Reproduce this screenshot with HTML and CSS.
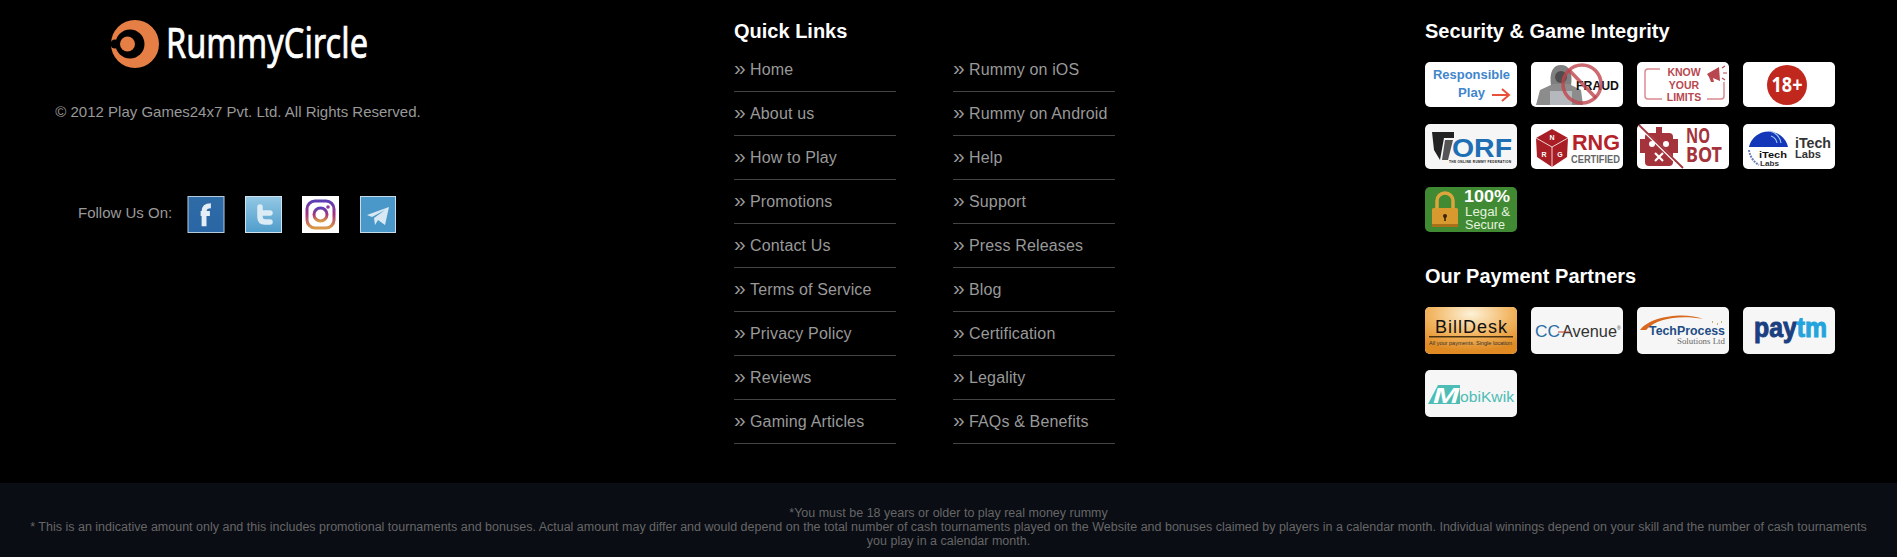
FILE: index.html
```html
<!DOCTYPE html>
<html lang="en">
<head>
    <meta charset="UTF-8">
    <meta name="viewport" content="width=device-width, initial-scale=1.0">
    <title>RummyCircle Footer</title>
    <link rel="stylesheet" href="styles.css">
</head>
<body>
    <footer class="site-footer">
        <div class="footer-main">
            <div class="brand-col">
                <svg class="logo" viewBox="0 0 320 52" role="img" aria-label="RummyCircle">
                    <circle cx="25" cy="26" r="24" fill="#e57f45"/>
                    <circle cx="20" cy="26" r="14.5" fill="#000"/>
                    <circle cx="17.5" cy="26" r="7.5" fill="#e57f45"/>
                    <circle cx="5" cy="26" r="4.5" fill="#000"/>
                    <text class="logo-text" x="56" y="40" textLength="202" lengthAdjust="spacingAndGlyphs">RummyCircle</text>
                </svg>
                <p class="copyright">© 2012 Play Games24x7 Pvt. Ltd. All Rights Reserved.</p>
                <div class="follow">
                    <span class="follow-label">Follow Us On:</span>
                    <svg class="social social-fb" viewBox="0 0 38 38">
                        <defs><linearGradient id="fbg" x1="0" y1="0" x2="0" y2="1"><stop offset="0" stop-color="#2f6ca6"/><stop offset="1" stop-color="#2a65a5"/></linearGradient></defs>
                        <rect x=".5" y=".5" width="37" height="37" fill="url(#fbg)" stroke="#b9cfe0"/>
                        <path d="M17 31V16Q17 10 24 10M13.5 18H23" fill="none" stroke="#e6eef5" stroke-width="5"/>
                    </svg>
                    <svg class="social" viewBox="0 0 37 37">
                        <defs><linearGradient id="twg" x1="0" y1="0" x2="0" y2="1"><stop offset="0" stop-color="#93c8e4"/><stop offset="1" stop-color="#4f9dcb"/></linearGradient></defs>
                        <rect x=".5" y=".5" width="36" height="36" fill="url(#twg)" stroke="#cfe2ee"/>
                        <path d="M15 11V21Q15 26 20 26H25M15 17H25" fill="none" stroke="#dcecf5" stroke-width="5.5" stroke-linecap="round"/>
                    </svg>
                    <svg class="social social-ig" viewBox="0 0 37 37">
                        <defs><linearGradient id="ing" x1="0" y1="0" x2="0" y2="1"><stop offset="0" stop-color="#5b3fb5"/><stop offset=".5" stop-color="#a8327f"/><stop offset="1" stop-color="#d99a45"/></linearGradient></defs>
                        <rect width="37" height="37" fill="#fff"/>
                        <rect x="5" y="5" width="27" height="27" rx="8" fill="none" stroke="url(#ing)" stroke-width="3"/>
                        <circle cx="18.5" cy="18.5" r="6.5" fill="none" stroke="url(#ing)" stroke-width="3"/>
                        <circle cx="26" cy="11" r="1.8" fill="#8b3a9c"/>
                    </svg>
                    <svg class="social social-tg" viewBox="0 0 36 37">
                        <rect x=".5" y=".5" width="35" height="36" fill="#4a98c9" stroke="#c5dcea"/>
                        <path d="M7 19 29 11 25 29 18 24 15 29 14 22 25 14 12 21Z" fill="#d9e9f3"/>
                    </svg>
                </div>
            </div>

            <nav class="links-col">
                <h3 class="footer-title">Quick Links</h3>
                <div class="links-grid">
                    <ul class="link-list">
                        <li><a href="#">Home</a></li>
                        <li><a href="#">About us</a></li>
                        <li><a href="#">How to Play</a></li>
                        <li><a href="#">Promotions</a></li>
                        <li><a href="#">Contact Us</a></li>
                        <li><a href="#">Terms of Service</a></li>
                        <li><a href="#">Privacy Policy</a></li>
                        <li><a href="#">Reviews</a></li>
                        <li><a href="#">Gaming Articles</a></li>
                    </ul>
                    <ul class="link-list">
                        <li><a href="#">Rummy on iOS</a></li>
                        <li><a href="#">Rummy on Android</a></li>
                        <li><a href="#">Help</a></li>
                        <li><a href="#">Support</a></li>
                        <li><a href="#">Press Releases</a></li>
                        <li><a href="#">Blog</a></li>
                        <li><a href="#">Certification</a></li>
                        <li><a href="#">Legality</a></li>
                        <li><a href="#">FAQs &amp; Benefits</a></li>
                    </ul>
                </div>
            </nav>

            <div class="badges-col">
                <h3 class="footer-title">Security &amp; Game Integrity</h3>
                <div class="badge-grid">
                    <svg class="badge" viewBox="0 0 92 45">
                        <text class="b-bold c-blue" x="8" y="17" font-size="12.5" textLength="77" lengthAdjust="spacingAndGlyphs">Responsible</text>
                        <text class="b-bold c-blue" x="33" y="35" font-size="13" textLength="27" lengthAdjust="spacingAndGlyphs">Play</text>
                        <path d="M67 33H83M77 27 84 33 77 39" fill="none" stroke="#e8503a" stroke-width="2"/>
                    </svg>
                    <svg class="badge" viewBox="0 0 92 45">
                        <path d="M20 24C18 10 22 3 30 3 38 3 42 10 40 24Z" fill="#7f7f7f"/>
                        <path d="M5 43 9 28 22 22H38L50 28 52 43Z" fill="#8c8c8c"/>
                        <circle cx="30" cy="15" r="6" fill="#4d4d4d"/>
                        <rect x="19" y="29" width="22" height="14" fill="#b5b9bd"/>
                        <text class="b-bold c-black" x="45" y="28" font-size="12" textLength="43" lengthAdjust="spacingAndGlyphs">FRAUD</text>
                        <circle cx="51" cy="22" r="19" fill="none" stroke="#c0444c" stroke-width="3.5" opacity=".8"/>
                        <path d="M38 8 65 36" stroke="#c0444c" stroke-width="3.5" opacity=".8"/>
                    </svg>
                    <svg class="badge" viewBox="0 0 92 45">
                        <path d="M23 7H11Q8 7 8 10V34Q8 37 11 37H25M70 37H84Q87 37 87 34V20" fill="none" stroke="#d98b90" stroke-width="1.5"/>
                        <text class="b-bold c-rose" x="47" y="14" font-size="10.5" text-anchor="middle">KNOW</text>
                        <text class="b-bold c-rose" x="47" y="27" font-size="10.5" text-anchor="middle">YOUR</text>
                        <text class="b-bold c-rose" x="47" y="39" font-size="10.5" text-anchor="middle">LIMITS</text>
                        <path d="M70 12 82 5 83 19 76 16 77 20 74 20 72 15Z" fill="#b8474f"/>
                        <path d="M85 6 88 4M86 11H90M85 16 88 18" stroke="#b8474f" stroke-width="1.2"/>
                    </svg>
                    <svg class="badge" viewBox="0 0 92 45">
                        <circle cx="44" cy="23" r="20" fill="#c0281e"/>
                        <text class="b-narrow c-white" x="44" y="30" font-size="21" text-anchor="middle" textLength="31" lengthAdjust="spacingAndGlyphs">18+</text>
                    </svg>

                    <svg class="badge badge-soft" viewBox="0 0 92 45">
                        <path d="M7 8H29V14H19L15 36 9 26Z" fill="#222"/>
                        <path d="M20 16H28L23 36 17 36Z" fill="#555"/>
                        <text class="b-bold c-torf" x="27" y="33" font-size="25" textLength="60" lengthAdjust="spacingAndGlyphs">ORF</text>
                        <text class="b-bold c-black" x="24" y="38.5" font-size="3.2" textLength="62">THE ONLINE RUMMY FEDERATION</text>
                    </svg>
                    <svg class="badge" viewBox="0 0 92 45">
                        <path d="M21 5 37 14 36 33 21 43 6 33 5 14Z" fill="#a91e25"/>
                        <path d="M5 14 21 23 37 14M21 23V43" fill="none" stroke="#fff" stroke-width=".8"/>
                        <text class="b-bold c-white" x="21" y="16" font-size="7" text-anchor="middle">N</text>
                        <text class="b-bold c-white" x="13" y="33" font-size="7" text-anchor="middle">R</text>
                        <text class="b-bold c-white" x="29" y="33" font-size="7" text-anchor="middle">G</text>
                        <text class="b-bold c-red" x="41" y="26" font-size="22" textLength="48" lengthAdjust="spacingAndGlyphs">RNG</text>
                        <text class="b-bold c-grey" x="40" y="39" font-size="10" textLength="49" lengthAdjust="spacingAndGlyphs">CERTIFIED</text>
                    </svg>
                    <svg class="badge" viewBox="0 0 92 45">
                        <rect x="3" y="15" width="5" height="14" fill="#a5333c"/>
                        <rect x="36" y="15" width="5" height="14" fill="#a5333c"/>
                        <rect x="8" y="9" width="28" height="33" rx="4" fill="#a5333c"/>
                        <rect x="19" y="3" width="6" height="6" fill="#a5333c"/>
                        <circle cx="15" cy="20" r="3" fill="#fff"/>
                        <circle cx="29" cy="20" r="3" fill="#fff"/>
                        <path d="M18 29 26 37M26 29 18 37" stroke="#fff" stroke-width="2.2"/>
                        <path d="M2 2 46 45" stroke="#fff" stroke-width="3"/>
                        <path d="M1 0 46 44" stroke="#a5333c" stroke-width="1.8"/>
                        <text class="b-narrow c-bot" x="49" y="19" font-size="21" textLength="24" lengthAdjust="spacingAndGlyphs">NO</text>
                        <text class="b-narrow c-bot" x="49" y="38" font-size="21" textLength="36" lengthAdjust="spacingAndGlyphs">BOT</text>
                    </svg>
                    <svg class="badge" viewBox="0 0 92 45">
                        <path d="M6 23A20 20 0 0 1 45 23Z" fill="#1436b8"/>
                        <path d="M26 7A14 14 0 0 1 38 19M28 12A9 9 0 0 1 34 19" fill="none" stroke="#9cc4ef" stroke-width="1.2"/>
                        <path d="M6 26A20 20 0 0 0 16 41" fill="none" stroke="#6a7fb5" stroke-width="2" stroke-dasharray="2 1"/>
                        <text class="b-bold c-black" x="16" y="34" font-size="9.5" textLength="28" lengthAdjust="spacingAndGlyphs">iTech</text>
                        <text class="b-bold c-dark" x="17" y="42" font-size="8" textLength="19" lengthAdjust="spacingAndGlyphs">Labs</text>
                        <text class="b-bold c-dark" x="52" y="24" font-size="14" textLength="36" lengthAdjust="spacingAndGlyphs">iTech</text>
                        <text class="b-bold c-dark" x="52" y="34" font-size="11" textLength="26" lengthAdjust="spacingAndGlyphs">Labs</text>
                    </svg>

                    <svg class="badge badge-green" viewBox="0 0 92 45">
                        <path d="M12 21V14A8 8 0 0 1 28 14V21" fill="none" stroke="#dca63c" stroke-width="3.5"/>
                        <rect x="7" y="21" width="26" height="19" rx="1.5" fill="#d89a2e"/>
                        <rect x="7" y="37" width="26" height="3" fill="#a87018"/>
                        <circle cx="20" cy="29" r="2" fill="#3a2408"/>
                        <rect x="19.2" y="29" width="1.6" height="5" fill="#3a2408"/>
                        <text class="b-bold c-white" x="39" y="15" font-size="16" textLength="46" lengthAdjust="spacingAndGlyphs">100%</text>
                        <text class="b-sans c-mint" x="40" y="29" font-size="12" textLength="45" lengthAdjust="spacingAndGlyphs">Legal &amp;</text>
                        <text class="b-sans c-mint" x="40" y="42" font-size="12" textLength="40" lengthAdjust="spacingAndGlyphs">Secure</text>
                    </svg>
                </div>

                <h3 class="footer-title footer-title-next">Our Payment Partners</h3>
                <div class="badge-grid payment-grid">
                    <svg class="badge" viewBox="0 0 92 47">
                        <defs><radialGradient id="bdg" cx=".5" cy=".15" r=".8"><stop offset="0" stop-color="#fdf2d8"/><stop offset=".55" stop-color="#f2b561"/><stop offset="1" stop-color="#df8a23"/></radialGradient></defs>
                        <rect width="92" height="47" fill="url(#bdg)"/>
                        <text class="b-sans c-black" x="10" y="26" font-size="18" textLength="72" lengthAdjust="spacing">BillDesk</text>
                        <rect x="4" y="29" width="84" height="1.5" fill="#4a3310"/>
                        <text class="b-sans c-dark" x="4" y="38" font-size="5" textLength="83" lengthAdjust="spacingAndGlyphs">All your payments. Single location</text>
                    </svg>
                    <svg class="badge badge-soft" viewBox="0 0 92 47">
                        <text class="b-sans c-ccblue" x="4" y="30" font-size="17" textLength="25" lengthAdjust="spacingAndGlyphs">CC</text>
                        <text class="b-sans c-dark" x="31" y="30" font-size="17" textLength="55" lengthAdjust="spacingAndGlyphs">Avenue</text>
                        <path d="M27 25H38" stroke="#b5382f" stroke-width="1"/>
                        <text class="b-sans c-dark" x="86" y="23" font-size="5">®</text>
                    </svg>
                    <svg class="badge badge-soft" viewBox="0 0 92 47">
                        <path d="M3 23C14 8 50 5 66 12 46 8 20 10 9 23Z" fill="#d9691e"/>
                        <text class="b-bold c-navy" x="12" y="28" font-size="12" textLength="76" lengthAdjust="spacingAndGlyphs">TechProcess</text>
                        <text class="b-serif c-grey" x="40" y="37" font-size="7.5" textLength="48" lengthAdjust="spacingAndGlyphs">Solutions Ltd</text>
                        <path d="M75 15H76M80 17H81M84 15H85" stroke="#c9963a" stroke-width="1.5"/>
                    </svg>
                    <svg class="badge badge-soft" viewBox="0 0 92 47">
                        <text class="b-bold b-heavy" x="11" y="30" font-size="27" textLength="73" lengthAdjust="spacingAndGlyphs"><tspan class="c-paynavy">pay</tspan><tspan class="c-paysky">tm</tspan></text>
                    </svg>
                    <svg class="badge badge-soft" viewBox="0 0 92 47">
                        <path d="M3 34 13 15H35V34Z" fill="#4dbdb5"/>
                        <text class="b-mark c-white" x="8" y="33" font-size="22" textLength="26" lengthAdjust="spacingAndGlyphs">M</text>
                        <text class="b-sans c-teal" x="35" y="32" font-size="15.5" textLength="54" lengthAdjust="spacingAndGlyphs">obiKwik</text>
                    </svg>
                </div>
            </div>
        </div>

        <div class="footer-note">
            <p>*You must be 18 years or older to play real money rummy</p>
            <p>* This is an indicative amount only and this includes promotional tournaments and bonuses. Actual amount may differ and would depend on the total number of cash tournaments played on the Website and bonuses claimed by players in a calendar month. Individual winnings depend on your skill and the number of cash tournaments you play in a calendar month.</p>
        </div>
    </footer>
</body>
</html>
```

FILE: styles.css
```css
html, body {
    margin: 0;
    padding: 0;
    background-color: #000;
}

body {
    font-family: "Liberation Sans", Arial, sans-serif;
    color: #999;
}

.site-footer {
    height: 557px;
    overflow: hidden;
}

.footer-main {
    display: grid;
    grid-template-columns: 734px 691px 1fr;
    height: 483px;
    padding-top: 18px;
    box-sizing: border-box;
}

/* left column */
.brand-col {
    width: 476px;
}

.logo {
    display: block;
    width: 320px;
    height: 52px;
    margin-left: 110px;
}

.logo-text {
    font-family: "Noto Sans", sans-serif;
    font-size: 41px;
    fill: #fff;
    stroke: #fff;
    stroke-width: .7px;
}

.copyright {
    margin: 32px 0 0;
    font-size: 15px;
    line-height: 20px;
    text-align: center;
}

.follow {
    display: flex;
    align-items: center;
    margin-top: 74px;
    padding-left: 78px;
}

.follow-label {
    width: 109px;
    padding-bottom: 5px;
    font-size: 15px;
}

.social {
    display: block;
    width: 37px;
    height: 37px;
    margin-right: 20px;
}

.social-fb {
    width: 38px;
}

.social-ig {
    margin-right: 21px;
}

.social-tg {
    width: 36px;
}

/* headings */
.footer-title {
    margin: 0;
    color: #fff;
    font-size: 20px;
    font-weight: 700;
    line-height: 26px;
}

.footer-title-next {
    margin-top: 31.2px;
}

/* quick links */
.links-grid {
    display: flex;
    gap: 57px;
    margin-top: 4px;
}

.link-list {
    width: 162px;
    margin: 0;
    padding: 0;
    list-style: none;
}

.link-list li {
    height: 44px;
    box-sizing: border-box;
    border-bottom: 1px solid #444;
    line-height: 43px;
}

.link-list a {
    color: #999;
    font-size: 16px;
    letter-spacing: .15px;
    text-decoration: none;
}

.link-list a::before {
    content: "»";
    display: inline-block;
    width: 16px;
    font-size: 21px;
    line-height: 20px;
}

/* badges */
.badge-grid {
    display: grid;
    grid-template-columns: repeat(4, 92px);
    column-gap: 14px;
    row-gap: 17.4px;
    margin-top: 18px;
}

.payment-grid {
    row-gap: 16px;
}

.badge {
    display: block;
    width: 92px;
    background-color: #fff;
    border-radius: 5px;
}

.badge-soft {
    background-color: #f6f6f6;
}

.badge-green {
    background-color: #3f8a33;
}

.b-bold {
    font-family: "Liberation Sans", sans-serif;
    font-weight: 700;
}

.b-heavy {
    stroke-width: 1px;
}

.b-heavy .c-paynavy {
    stroke: #1b3f80;
}

.b-heavy .c-paysky {
    stroke: #23a4dd;
}

.b-sans {
    font-family: "Liberation Sans", sans-serif;
}

.b-narrow {
    font-family: "Noto Sans", sans-serif;
    font-weight: 700;
}

.b-serif {
    font-family: "Liberation Serif", serif;
}

.b-mark {
    font-family: "Liberation Sans", sans-serif;
    font-weight: 700;
    font-style: italic;
}

.c-blue { fill: #3f86cc; }
.c-black { fill: #111; }
.c-dark { fill: #333; }
.c-rose { fill: #b8474f; }
.c-white { fill: #fff; }
.c-torf { fill: #1f6fb5; }
.c-red { fill: #b5222a; }
.c-grey { fill: #666; }
.c-bot { fill: #a5333c; }
.c-mint { fill: #e6f3df; }
.c-navy { fill: #1f4d85; }
.c-ccblue { fill: #2a6ea6; }
.c-paynavy { fill: #1b3f80; }
.c-paysky { fill: #23a4dd; }
.c-teal { fill: #4dbdb5; }

/* disclaimer strip */
.footer-note {
    height: 74px;
    box-sizing: border-box;
    padding: 23px 30px 0;
    background-color: #0a0d14;
    color: #666;
    font-size: 12.5px;
    line-height: 14px;
    text-align: center;
}

.footer-note p {
    margin: 0;
}
```
